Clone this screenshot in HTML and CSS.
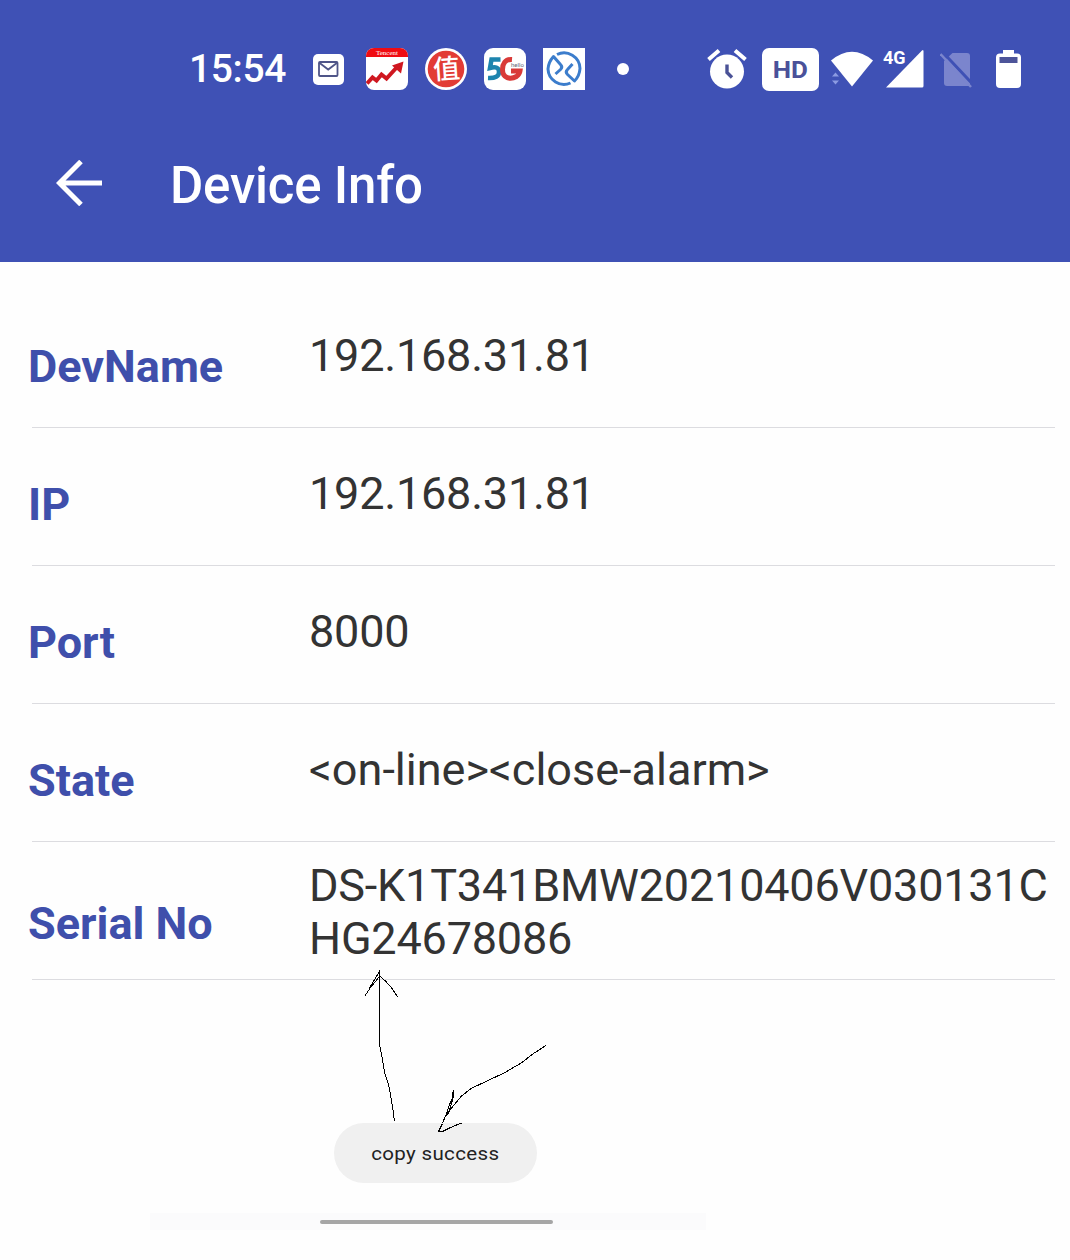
FILE: index.html
```html
<!DOCTYPE html>
<html lang="en">
<head>
<meta charset="utf-8">
<title>Device Info</title>
<link rel="stylesheet" href="styles.css">
</head>
<body>
<div class="screen">
  <header class="header">
    <div class="status">
      <span class="clock">15:54</span>
      <div class="notifications">
        <svg class="mail" width="31" height="44" viewBox="0 0 31 44">
          <rect y="7" width="31" height="31" rx="5" fill="#fff"/>
          <rect x="6" y="15" width="18.500" height="14" rx="1" fill="none" stroke="#4f5588" stroke-width="1.800"/>
          <path d="M6 15.500l9.200 7 9.300-7" fill="none" stroke="#4f5588" stroke-width="1.800"/>
        </svg>
        <svg width="42" height="44" viewBox="0 0 42 44">
          <rect y="1" width="42" height="42" rx="8" fill="#fff"/>
          <path d="M0 10V9a8 8 0 0 1 8-8h26a8 8 0 0 1 8 8v1z" fill="#f00c12"/>
          <text x="21" y="8" class="tiny-brand">Tencent</text>
          <path d="M1 36.500l5.500-6 4 3 5-6 5 4L32 19" fill="none" stroke="#cf1720" stroke-width="4"/>
          <path d="M26 18.500l11.500-4-2.500 12z" fill="#cf1720"/>
        </svg>
        <svg width="42" height="44" viewBox="0 0 42 44">
          <circle cx="21" cy="22" r="21" fill="#fff"/>
          <circle cx="21" cy="22" r="18.300" fill="#e23c35"/>
          <text x="21.500" y="31.500" class="zhi" transform="rotate(-4 21 22)">值</text>
        </svg>
        <svg width="42" height="44" viewBox="0 0 42 44">
          <rect y="1" width="42" height="42" rx="9" fill="#fff"/>
          <path d="M16.500 12.500H7.500L6 21q9-2.500 9 4 0 6.500-11 6" fill="none" stroke="#1d84ae" stroke-width="4.500"/>
          <path d="M28 12.500C21 12 18.500 17 18.500 22.500c0 9 8 10.500 14 7q3-2 3.500-5.500h-9" fill="none" stroke="#d93a38" stroke-width="5"/>
          <text x="27" y="20" class="hello">hello</text>
        </svg>
        <svg width="42" height="44" viewBox="0 0 42 44">
          <rect y="1" width="42" height="42" fill="#fff"/>
          <g fill="none" stroke="#3c7dcc" stroke-width="3" stroke-linejoin="round">
            <path d="M14 7.500A16 16 0 0 1 37 21.500Q36.500 29 31.500 34L24.500 27.500Q22 25 24.500 22.500L29.500 17"/>
            <path d="M27.500 36A16 16 0 0 1 5 22Q5.500 15 10.500 9.500L17.500 17.500Q20 20 17.500 22.500L12.500 27"/>
          </g>
        </svg>
        <span class="dot"></span>
      </div>
      <div class="system">
        <svg class="alarm" width="40" height="44" viewBox="0 0 40 44">
          <circle cx="20" cy="24.500" r="17" fill="#fff"/>
          <path d="M1.500 12.500l10.500-9M28 3.500l10.500 9" stroke="#fff" stroke-width="4"/>
          <path d="M20 17.500v8l5 5" fill="none" stroke="#4a5296" stroke-width="3.400"/>
        </svg>
        <span class="hd"><span class="hd-text">HD</span></span>
        <svg class="wifi" width="42" height="44" viewBox="0 0 42 44">
          <path d="M0 13.500Q21-4 42 13.500L21 39.500z" fill="#fff"/>
          <path d="M1 29.500l3.500-4 3.500 4zM1 33.500h7l-3.500 4z" fill="#8c9be2"/>
        </svg>
        <svg class="signal" width="41" height="44" viewBox="0 0 41 44">
          <path d="M3 40.500L39 3.500q1.500-1.500 1.500 1V39q0 1.500-1.500 1.500z" fill="#fff"/>
          <text x="0" y="17" class="net">4G</text>
        </svg>
        <svg class="sim" width="33" height="44" viewBox="0 0 33 44">
          <path d="M4 14L12.500 6H27q3 0 3 3v30H7q-3 0-3-3z" fill="#7b85cd"/>
          <path d="M2.500 5L33 37.500" stroke="#3f51b5" stroke-width="3"/>
          <path d="M.5 7L31 40" stroke="#7b85cd" stroke-width="2.500"/>
        </svg>
        <svg width="25" height="44" viewBox="0 0 25 44">
          <path d="M7 3h11v3.500h3q4 0 4 4V37q0 4-4 4H4q-4 0-4-4V10.500q0-4 4-4h3z" fill="#fff"/>
          <rect x="3.500" y="10" width="18" height="6" fill="#4d5499"/>
        </svg>
      </div>
    </div>
    <div class="toolbar">
      <svg width="46" height="46" viewBox="0 0 46 46">
        <path d="M46 23H4M25 1.500L3.500 23 25 44.500" fill="none" stroke="#fff" stroke-width="5"/>
      </svg>
      <h1 class="title">Device Info</h1>
    </div>
  </header>

  <main class="list">
    <div class="row"><div class="label">DevName</div><div class="value numeric">192.168.31.81</div></div>
    <div class="row"><div class="label">IP</div><div class="value numeric">192.168.31.81</div></div>
    <div class="row"><div class="label">Port</div><div class="value numeric">8000</div></div>
    <div class="row"><div class="label">State</div><div class="value">&lt;on-line&gt;&lt;close-alarm&gt;</div></div>
    <div class="row row-tall"><div class="label">Serial No</div><div class="value numeric">DS-K1T341BMW20210406V030131C<br>HG24678086</div></div>
  </main>

  <footer class="footer">
    <div class="toast"><span class="toast-text">copy success</span></div>
    <div class="navstrip"><div class="handle"></div></div>
  </footer>

  <svg class="scribble" width="200" height="170" viewBox="360 966 200 170" shape-rendering="crispEdges">
    <path d="M394.500 1121.500l-2-15-2-12-2-10-4-12-2-13-3.500-18v-70M364.500 996.500l6-9 9-11M369 989l10-17v9M379.500 976l6 5 7 8 5 8"/>
    <path d="M546 1045.500l-14 9-10 8-17 10-17 8-17 8-10 8-14 17M453.500 1089.500v7l-4 8-4 12 3-3 4-13M445.500 1115.500l-3 8-4 8h4l8-4 11-4.500"/>
    <path d="M452.500 1092v6l-4 9-2 8"/>
  </svg>
</div>
</body>
</html>
```
FILE: styles.css
```css
* {
  box-sizing: border-box;
}

body {
  margin: 0;
  background: #fefefe;
  font-family: Roboto, "Liberation Sans", sans-serif;
}

svg {
  display: block;
  flex: none;
}

.screen {
  position: relative;
  width: 1070px;
  height: 1260px;
  overflow: hidden;
  display: flex;
  flex-direction: column;
}

.header {
  height: 262px;
  flex: none;
  background: #3f51b5;
  color: #fff;
}

.status {
  display: flex;
  align-items: center;
  height: 91px;
  padding: 47px 49px 0 189px;
}

.clock {
  width: 124px;
  font-size: 39px;
  font-weight: 500;
  line-height: 44px;
  letter-spacing: -0.4px;
}

.notifications {
  display: flex;
  align-items: center;
  gap: 17px;
}

.mail {
  margin-right: 5px;
}

.dot {
  width: 12px;
  height: 12px;
  margin-left: 15px;
  border-radius: 50%;
  background: #fff;
}

.system {
  display: flex;
  align-items: center;
  margin-left: auto;
}

.alarm {
  margin-right: 15px;
}

.hd {
  width: 57px;
  height: 43px;
  margin-right: 12px;
  border-radius: 7px;
  background: #fff;
  color: #4a5199;
  font-size: 24px;
  font-weight: 700;
  line-height: 44px;
  text-align: center;
}

.hd-text {
  display: inline-block;
  transform: scaleX(1.08);
}

.wifi {
  margin-right: 10px;
}

.signal {
  margin-right: 16px;
}

.sim {
  margin-right: 23px;
}

.tiny-brand {
  font: 7px "Liberation Serif", serif;
  fill: #fff;
  text-anchor: middle;
}

.zhi {
  font: 500 27px "Noto Sans CJK SC", sans-serif;
  fill: #fff;
  text-anchor: middle;
}

.hello {
  font: 6px Roboto, sans-serif;
  fill: #667;
}

.net {
  font: 700 18px Roboto, sans-serif;
  fill: #fff;
}

.toolbar {
  display: flex;
  align-items: center;
  gap: 68px;
  height: 143px;
  padding: 66px 0 25px 56px;
}

.title {
  margin: 6px 0 0;
  font-size: 51px;
  font-weight: 500;
  line-height: 60px;
  letter-spacing: -0.2px;
}

.list {
  padding-top: 28px;
}

.row {
  display: grid;
  grid-template-columns: 281px 1fr;
  align-items: start;
  height: 138px;
  padding-left: 28px;
  background: linear-gradient(#dcdce0, #dcdce0) 32px 137px / 1023px 1px no-repeat;
  font-size: 45px;
  line-height: 53px;
}

.label {
  padding-top: 50px;
  color: #3f4fab;
  font-weight: 700;
}

.value {
  padding-top: 39px;
  color: #333;
  white-space: nowrap;
}

.numeric {
  letter-spacing: -0.2px;
}

.row-tall .label {
  padding-top: 55px;
}

.row-tall .value {
  padding-top: 17px;
}

.footer {
  display: flex;
  flex-direction: column;
  padding-top: 143px;
}

.toast {
  width: 203px;
  height: 60px;
  margin-left: 334px;
  border-radius: 30px;
  background: #f0f0f0;
  color: #222;
  font-size: 18px;
  line-height: 61px;
  letter-spacing: 0.3px;
  text-align: center;
}

.toast-text {
  display: inline-block;
  transform: scaleX(1.14);
}

.navstrip {
  width: 556px;
  height: 17px;
  margin: 30px 0 0 150px;
  padding: 7px 0 0 170px;
  background: #fbfbfc;
}

.handle {
  width: 233px;
  height: 4px;
  border-radius: 2px;
  background: #a5a5a5;
}

.scribble {
  position: absolute;
  left: 360px;
  top: 966px;
  fill: none;
  stroke: #000;
  stroke-width: 1;
}
```
